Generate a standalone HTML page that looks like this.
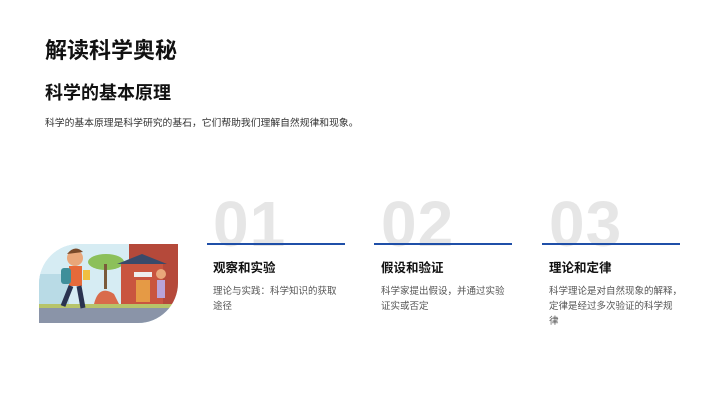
<!DOCTYPE html>
<html><head><meta charset="utf-8"><style>
*{margin:0;padding:0;box-sizing:border-box}
body{width:720px;height:405px;background:#fff;position:relative;overflow:hidden;font-family:"Liberation Sans","Noto Sans CJK SC",sans-serif;color:#111}
.a{position:absolute;white-space:nowrap}
.num{font-size:64px;font-weight:bold;color:#e6e6e6;line-height:1;letter-spacing:1px;font-family:"Liberation Sans",sans-serif}
.ln{height:2px;background:#1f4fa8;width:138px}
.h{font-size:12.5px;font-weight:bold}
.d{font-size:9.5px;color:#555;line-height:15px;white-space:normal;width:130px}
.img{position:absolute;left:39px;top:244px;width:139px;height:79px;border-radius:40px 0 40px 0;overflow:hidden;background:#cfe8f2}
</style></head><body>
<div class="a" style="left:45px;top:33px;font-size:22px;font-weight:bold">解读科学奥秘</div>
<div class="a" style="left:45px;top:79px;font-size:18px;font-weight:bold">科学的基本原理</div>
<div class="a" style="left:45px;top:115px;font-size:9.8px;color:#333">科学的基本原理是科学研究的基石，它们帮助我们理解自然规律和现象。</div>

<div class="a num" style="left:213px;top:192px">01</div>
<div class="a ln" style="left:207px;top:243px"></div>
<div class="a h" style="left:213px;top:257px">观察和实验</div>
<div class="a d" style="left:213px;top:284px">理论与实践：科学知识的获取途径</div>

<div class="a num" style="left:381px;top:192px">02</div>
<div class="a ln" style="left:374px;top:243px"></div>
<div class="a h" style="left:381px;top:257px">假设和验证</div>
<div class="a d" style="left:381px;top:284px">科学家提出假设，并通过实验证实或否定</div>

<div class="a num" style="left:549px;top:192px">03</div>
<div class="a ln" style="left:542px;top:243px"></div>
<div class="a h" style="left:549px;top:257px">理论和定律</div>
<div class="a d" style="left:549px;top:284px;width:140px">科学理论是对自然现象的解释，<br>定律是经过多次验证的科学规<br>律</div>

<div class="img">
<svg width="139" height="79" viewBox="0 0 139 79">
<rect width="139" height="79" fill="#d6ecf3"/>
<rect x="0" y="30" width="30" height="30" fill="#b9dbe6"/>
<rect x="90" y="0" width="49" height="60" fill="#b5493a"/>
<ellipse cx="67" cy="18" rx="18" ry="8" fill="#8cc05a"/>
<rect x="65" y="20" width="3" height="25" fill="#7a5a3a"/>
<polygon points="78,20 103,10 128,20" fill="#3a4a6a"/>
<rect x="82" y="20" width="42" height="40" fill="#c9553f"/>
<rect x="95" y="28" width="18" height="5" fill="#eee"/>
<rect x="97" y="36" width="14" height="22" fill="#e59a45"/>
<path d="M55 60 Q60 40 75 50 L80 60Z" fill="#d96b4b"/>
<rect x="0" y="60" width="139" height="4" fill="#b7c46a"/>
<rect x="0" y="64" width="139" height="15" fill="#8a94a8"/>
<circle cx="36" cy="14" r="8" fill="#e9a77a"/>
<path d="M28 10 Q36 0 44 8" fill="#7a4a2a"/>
<rect x="30" y="22" width="13" height="20" fill="#e66a3a"/>
<rect x="22" y="24" width="10" height="16" rx="3" fill="#3f8f9a"/>
<path d="M32 42 L24 62 M40 42 L44 64" stroke="#2a3350" stroke-width="5"/>
<rect x="44" y="26" width="7" height="10" fill="#f0c040"/>
<circle cx="122" cy="30" r="5" fill="#e9a77a"/>
<rect x="118" y="36" width="8" height="18" fill="#b9a3d8"/>
</svg>
</div>
</body></html>
